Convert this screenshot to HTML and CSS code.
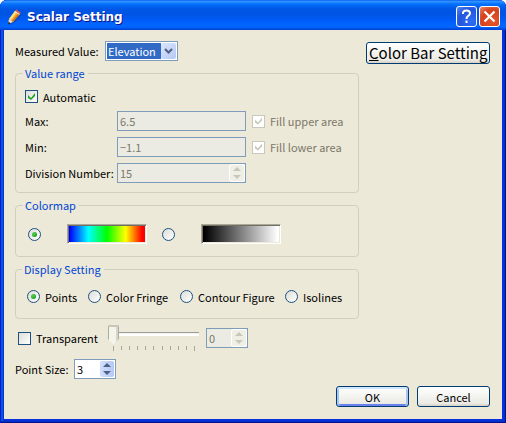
FILE: index.html
```html
<!DOCTYPE html>
<html lang="en">
<head>
<meta charset="utf-8">
<title>Scalar Setting</title>
<link rel="stylesheet" href="styles.css">
</head>
<body>
<form class="window">
  <header class="titlebar">
    <svg class="app-icon" width="16" height="16" viewBox="0 0 16 16" aria-hidden="true">
      <path d="M3 16 L6 12 L13 5 L14 6 L8 13Z" fill="#0a2f9a" opacity=".5"/>
      <path d="M2 10 L8 2 L13 5 L6 13Z" fill="#f6a92c"/>
      <path d="M2 10 L8 2 L10 3 L4 11Z" fill="#ffe27a"/>
      <path d="M5 12 L11.500 4 L13 5 L6 13Z" fill="#c9741a"/>
      <path d="M8 2 L9.200 0.500 L13.800 3.500 L12.800 5Z" fill="#e2564a"/>
      <path d="M7.400 2.800 L8 2 L12.800 5 L12.200 5.800Z" fill="#e8e8e8"/>
      <path d="M2 10 L1 15 L6 13Z" fill="#f7e6cc"/>
      <path d="M1.500 12.500 L1 15.500 L3.800 14.200Z" fill="#222"/>
    </svg>
    <h1 class="title">Scalar Setting</h1>
    <button type="button" class="caption-button" aria-label="Help">
      <svg width="21" height="21" viewBox="0 0 21 21"><path d="M7 8 V7 Q7 4.500 10.500 4.500 Q14 4.500 14 7.300 Q14 9 12 10 Q10.500 11 10.500 13 M10.500 14.500 V17" fill="none" stroke="#fff" stroke-width="2"/></svg>
    </button>
    <button type="button" class="caption-button close" aria-label="Close">
      <svg width="21" height="21" viewBox="0 0 21 21"><path d="M5.500 5.500 L15.500 15.500 M15.500 5.500 L5.500 15.500" stroke="#fff" stroke-width="2.200"/></svg>
    </button>
  </header>

  <main class="content">
    <div class="columns">
      <div class="settings">
        <div class="row measured">
          <label for="measured">Measured Value:</label>
          <span class="combo">
            <select id="measured"><option>Elevation</option></select>
            <svg class="combo-arrow" width="15" height="16" viewBox="0 0 15 16" aria-hidden="true"><path d="M4 6 L7.500 9.500 L11 6" fill="none" stroke="#4d6185" stroke-width="2"/></svg>
          </span>
        </div>

        <fieldset class="group range">
          <legend>Value range</legend>
          <label class="choice"><input type="checkbox" checked>Automatic</label>
          <div class="range-grid">
            <label for="max">Max:</label>
            <input class="field" id="max" type="text" value="6.5" disabled>
            <label class="choice off"><input type="checkbox" checked disabled>Fill upper area</label>
            <label for="min">Min:</label>
            <input class="field" id="min" type="text" value="−1.1" disabled>
            <label class="choice off"><input type="checkbox" checked disabled>Fill lower area</label>
            <label for="division">Division Number:</label>
            <span class="spin off">
              <input class="field" id="division" type="number" value="15" disabled>
              <svg class="arrows" width="14" height="16" viewBox="0 0 14 16" aria-hidden="true"><path d="M3 6 L7 2 L11 6Z M3 10 L7 14 L11 10Z"/></svg>
            </span>
          </div>
        </fieldset>

        <fieldset class="group colormap">
          <legend>Colormap</legend>
          <div class="row maps">
            <label class="map"><input type="radio" name="map" aria-label="Rainbow" checked><span class="swatch rainbow"></span></label>
            <label class="map"><input type="radio" name="map" aria-label="Grayscale"><span class="swatch gray"></span></label>
          </div>
        </fieldset>

        <fieldset class="group display">
          <legend>Display Setting</legend>
          <div class="row modes">
            <label class="choice mode-points"><input type="radio" name="mode" checked>Points</label>
            <label class="choice mode-fringe"><input type="radio" name="mode">Color Fringe</label>
            <label class="choice mode-contour"><input type="radio" name="mode">Contour Figure</label>
            <label class="choice"><input type="radio" name="mode">Isolines</label>
          </div>
        </fieldset>

        <div class="row transparency">
          <label class="choice"><input type="checkbox">Transparent</label>
          <span class="slider">
            <input type="range" min="0" max="100" value="0" aria-label="Transparency" disabled>
            <svg class="ticks" width="92" height="5" viewBox="0 0 92 5" aria-hidden="true"><path d="M5.500 0V5 M13.500 0V4 M21.500 0V4 M29.500 0V4 M37.500 0V4 M45.500 0V4 M54.500 0V4 M62.500 0V4 M70.500 0V4 M78.500 0V4 M86.500 0V5" stroke="#aca899"/></svg>
          </span>
          <span class="spin small off">
            <input class="field" type="number" value="0" aria-label="Transparency value" disabled>
            <svg class="arrows" width="14" height="16" viewBox="0 0 14 16" aria-hidden="true"><path d="M3 6 L7 2 L11 6Z M3 10 L7 14 L11 10Z"/></svg>
          </span>
        </div>

        <div class="row point-size">
          <label for="size">Point Size:</label>
          <span class="spin small">
            <input class="field" id="size" type="number" value="3">
            <svg class="arrows" width="14" height="16" viewBox="0 0 14 16" aria-hidden="true"><path d="M3 6 L7 2 L11 6Z M3 10 L7 14 L11 10Z"/></svg>
          </span>
        </div>
      </div>
      <button type="button" class="button large"><u>C</u>olor Bar Setting</button>
    </div>

    <footer class="actions">
      <button type="submit" class="button default">OK</button>
      <button type="button" class="button">Cancel</button>
    </footer>
  </main>
</form>
</body>
</html>
```

FILE: styles.css
```css
* {
  box-sizing: border-box;
}

body {
  margin: 0;
  background: #fff;
  color: #000;
  font: 11px/16px "Noto Sans CJK JP", sans-serif;
}

input,
select,
button {
  margin: 0;
  font: inherit;
  color: inherit;
}

label {
  white-space: nowrap;
}

.window {
  display: flex;
  flex-direction: column;
  min-height: 100vh;
  padding: 0 4px 4px;
  border-radius: 7px 7px 0 0;
  background: #0831d9;
  box-shadow: inset 1px 0 #0019cf, inset -1px -1px #00138c, inset -2px -2px #0030c8, inset 3px 0 #0855dd;
}

.titlebar {
  display: flex;
  align-items: center;
  gap: 2px;
  height: 30px;
  margin: 0 -4px;
  padding: 3px 6px 0 7px;
  border-radius: 7px 7px 0 0;
  background: linear-gradient(#0058ee 0, #3593ff 4%, #288eff 7%, #127dff 10%, #036ffc 15%, #0262ee 22%, #0057e5 30%, #0054e3 45%, #005af5 65%, #0066ff 82%, #0066ff 90%, #004fe0 96%, #003dd7 100%);
}

.title {
  flex: 1;
  margin: 0 0 0 2px;
  color: #fff;
  font: bold 12px/16px "DejaVu Sans", sans-serif;
  text-shadow: 1px 1px #0f1089;
}

.caption-button {
  width: 21px;
  height: 21px;
  padding: 0;
  border: 1px solid #fff;
  border-radius: 3px;
  background: radial-gradient(circle at 75% 75%, #2f6df5, #2355dc 60%, #5b8bf5);
}

.caption-button svg {
  display: block;
  margin: -1px;
}

.caption-button.close {
  background: radial-gradient(circle at 70% 75%, #e4572c, #d5421c 60%, #e88a70);
}

.content {
  flex: 1;
  padding: 11px 12px 12px 11px;
  background: #ece9d8;
}

.columns {
  display: grid;
  grid-template-columns: 1fr auto;
  align-items: start;
  gap: 7px;
}

.row,
.choice,
.map {
  display: flex;
  align-items: center;
}

.choice {
  gap: 5px;
}

.choice.off {
  color: #7b7869;
}

.measured {
  height: 20px;
}

.measured label {
  width: 90px;
}

.combo {
  position: relative;
  display: flex;
}

.combo select {
  width: 73px;
  height: 20px;
  padding: 0 17px 0 2px;
  border: 1px solid #7f9db9;
  border-radius: 0;
  box-shadow: inset 0 0 0 1px #fff;
  appearance: none;
  background: linear-gradient(#316ac5, #316ac5) 1px 1px / 54px 16px no-repeat #fff;
  color: #fff;
}

.combo-arrow {
  position: absolute;
  top: 2px;
  right: 2px;
  border-radius: 2px;
  background: linear-gradient(135deg, #dbe5fd, #b5c8f5);
}

.group {
  min-width: 0;
  margin: 4px 0 0;
  padding: 0 9px;
  border: 1px solid #d0d0bf;
  border-radius: 4px;
}

.group legend {
  margin-left: -2px;
  padding: 0 3px 0 2px;
  color: #0046d5;
}

.range {
  padding-top: 9px;
  padding-bottom: 9px;
}

.range > .choice {
  height: 13px;
}

.range-grid {
  display: grid;
  grid-template-columns: 86px 129px 1fr;
  align-items: center;
  gap: 6px;
  margin-top: 8px;
}

input[type="checkbox"],
input[type="radio"] {
  flex: none;
  width: 13px;
  height: 13px;
  appearance: none;
  border: 1px solid #1c5180;
  background: linear-gradient(135deg, #dcdcd7, #fff);
}

input[type="checkbox"]:checked::before {
  content: "";
  display: block;
  width: 7px;
  height: 7px;
  margin: 2px;
  background: #21a121;
  clip-path: polygon(0 2px, 3px 5px, 7px 0, 7px 3px, 3px 7px, 0 5px);
}

input[type="checkbox"]:disabled {
  border-color: #cac8bb;
  background: #fff;
}

input[type="checkbox"]:disabled::before {
  background: #cac8bb;
}

input[type="radio"] {
  border-radius: 50%;
}

input[type="radio"]:checked::before {
  content: "";
  display: block;
  width: 5px;
  height: 5px;
  margin: 3px;
  border-radius: 50%;
  background: radial-gradient(circle at 35% 35%, #55d551, #21a121 70%);
}

.field {
  width: 100%;
  height: 20px;
  padding: 0 2px;
  border: 1px solid #7f9db9;
  border-radius: 0;
  outline: 0;
  background: #fff;
  appearance: textfield;
}

.field::-webkit-inner-spin-button {
  appearance: none;
}

.field:disabled {
  background: #ebebe4;
  color: #7b7869;
}

.spin {
  position: relative;
  display: flex;
}

.spin.small {
  width: 42px;
}

.arrows {
  position: absolute;
  top: 2px;
  right: 2px;
  border-radius: 2px;
  background: linear-gradient(90deg, #d2dffd, #b5c8f5);
  box-shadow: 0 0 0 1px #fff;
  fill: #4d6185;
}

.off .arrows {
  background: #f0efe6;
  fill: #c9c7ba;
}

.colormap {
  padding: 11px 12px 12px;
}

.colormap legend,
.display legend {
  margin-left: -5px;
}

.map {
  gap: 26px;
}

.maps {
  gap: 15px;
}

.swatch {
  width: 80px;
  height: 20px;
  border: 1px solid;
  border-color: #aca899 #fff #fff #aca899;
  box-shadow: inset 1px 1px #716f64, inset -1px -1px #ece9d8;
}

.rainbow {
  background: linear-gradient(90deg, #00f 2%, #0ff 26%, #0f0 50%, #ff0 74%, #f00 95%);
}

.gray {
  background: linear-gradient(90deg, #000 3%, #fff 97%);
}

.display {
  padding: 13px 11px 15px;
}

.modes {
  height: 13px;
}

.mode-points {
  width: 61px;
}

.mode-fringe {
  width: 92px;
}

.mode-contour {
  width: 105px;
}

.transparency {
  height: 26px;
  margin-top: 6px;
  padding-left: 3px;
}

.transparency > .choice {
  width: 90px;
}

.slider {
  display: flex;
  flex-direction: column;
  justify-content: space-between;
  width: 92px;
  height: 26px;
  margin-right: 6px;
}

.slider input {
  width: 92px;
  height: 19px;
  appearance: none;
  background: linear-gradient(#9d9c99 0 1px, #f4f3ee 1px 2px, #fff 2px 4px) 1px 7px / 90px 4px no-repeat;
}

.slider input::-webkit-slider-thumb {
  width: 11px;
  height: 19px;
  appearance: none;
  border-top: 2px solid #c9c7ba;
  background: linear-gradient(90deg, #aeac9f 0 1px, #f5f4ea 1px 8px, #d8d6c8 8px 10px, #aeac9f 10px);
  clip-path: polygon(0 0, 100% 0, 100% 14px, 6px 100%, 5px 100%, 0 14px);
}

.ticks {
  display: block;
}

.point-size {
  height: 20px;
  margin-top: 8px;
}

.point-size label {
  width: 59px;
}

.button {
  min-width: 73px;
  height: 21px;
  padding: 0 2px;
  border: 1px solid #003c74;
  border-radius: 3px;
  background: linear-gradient(#fff, #f3f3ef 50%, #ecebe5 85%, #d6d0c5);
  line-height: 16px;
}

.button.default {
  box-shadow: inset 0 2px #cee7ff, inset 2px 0 #a9c4f0, inset -2px 0 #a9c4f0, inset 0 -2px #6982ee;
}

.button.large {
  width: 124px;
  height: 22px;
  margin-top: 1px;
  font-size: 15px;
  white-space: nowrap;
}

.actions {
  display: flex;
  justify-content: flex-end;
  gap: 8px;
  margin-top: 7px;
}
```
